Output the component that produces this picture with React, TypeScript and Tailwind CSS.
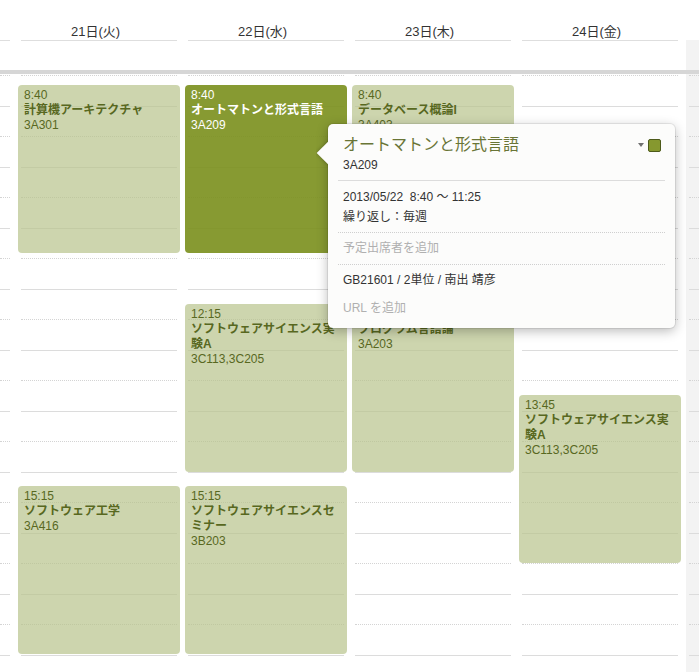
import React from "react";

type Ev = { top: number; time: string; title: string; room: string; selected?: boolean };

const days = ["21日(火)", "22日(水)", "23日(木)", "24日(金)"];

const events: Ev[][] = [
  [
    { top: 11, time: "8:40", title: "計算機アーキテクチャ", room: "3A301" },
    { top: 412, time: "15:15", title: "ソフトウェア工学", room: "3A416" },
  ],
  [
    { top: 11, time: "8:40", title: "オートマトンと形式言語", room: "3A209", selected: true },
    { top: 230, time: "12:15", title: "ソフトウェアサイエンス実験A", room: "3C113,3C205" },
    { top: 412, time: "15:15", title: "ソフトウェアサイエンスセミナー", room: "3B203" },
  ],
  [
    { top: 11, time: "8:40", title: "データベース概論I", room: "3A403" },
    { top: 230, time: "12:15", title: "プログラム言語論", room: "3A203" },
  ],
  [{ top: 321, time: "13:45", title: "ソフトウェアサイエンス実験A", room: "3C113,3C205" }],
];

function Lines() {
  return (
    <>
      <div className="h-[2px] border-b border-dotted border-[#d4d4d4]" />
      <div className="h-[31px] border-b border-[#dcdcdc]" />
      {Array.from({ length: 10 }).map((_, i) => (
        <React.Fragment key={i}>
          <div className="h-[30px] border-b border-dotted border-[#d4d4d4]" />
          <div className="h-[31px] border-b border-[#dcdcdc]" />
        </React.Fragment>
      ))}
    </>
  );
}

function EventCard({ ev }: { ev: Ev }) {
  return (
    <div
      className={
        ev.selected
          ? "absolute left-0 right-0 h-[168px] rounded-[4px] pl-[6px] pr-[4px] pt-[3px] text-[12px] leading-[15px] bg-[#7a8f1c]/90 text-white"
          : "absolute left-0 right-0 h-[168px] rounded-[4px] pl-[6px] pr-[4px] pt-[3px] text-[12px] leading-[15px] bg-[#b8c38b]/70 text-[#58681f]"
      }
      style={{ top: ev.top }}
    >
      <div>{ev.time}</div>
      <div className="font-bold">{ev.title}</div>
      <div>{ev.room}</div>
    </div>
  );
}

export default function App() {
  return (
    <div className="relative w-[699px] h-[672px] overflow-hidden bg-white font-['Liberation_Sans','Noto_Sans_CJK_JP',sans-serif]">
      {/* header */}
      <div className="flex gap-[5px] h-[70px]">
        <div className="w-[13px] shrink-0">
          <div className="h-[41px] border-b border-[#dedede] mr-[3px]" />
        </div>
        {days.map((d) => (
          <div key={d} className="w-[162px] shrink-0 px-[3px]">
            <div className="h-[41px] border-b border-[#dedede] pt-[24px] pr-[7px] text-center text-[13px] leading-[16px] text-[#333]">
              {d}
            </div>
          </div>
        ))}
        <div className="w-[162px] shrink-0 flex flex-col">
          <div className="h-[40px]" />
          <div className="flex-1 bg-[#f3f3f3]" />
        </div>
      </div>
      <div className="h-[4px] bg-[#d6d6d6]" />

      {/* body */}
      <div className="flex gap-[5px] h-[598px] overflow-hidden">
        <div className="w-[13px] shrink-0 pr-[3px]">
          <Lines />
        </div>
        {events.map((col, i) => (
          <div key={i} className="relative w-[162px] shrink-0">
            <div className="px-[3px]">
              <Lines />
            </div>
            {col.map((ev) => (
              <EventCard key={ev.time + ev.title} ev={ev} />
            ))}
          </div>
        ))}
        <div className="w-[162px] shrink-0 bg-[#f3f3f3] px-[3px]">
          <Lines />
        </div>
      </div>

      {/* popover */}
      <div className="absolute left-[328px] top-[124px] w-[347px] h-[204px] rounded-[5px] bg-[#fcfcfb] shadow-[0_0_0_1px_rgba(0,0,0,0.07),0_3px_12px_rgba(0,0,0,0.28)]">
        <div className="absolute left-[-12px] top-[13px] w-[12px] h-[32px] overflow-hidden">
          <div className="absolute left-[4px] top-[8px] w-[16px] h-[16px] rotate-45 bg-[#fcfcfb] shadow-[0_0_4px_rgba(0,0,0,0.3)]" />
        </div>
        <div className="flex items-start pl-[15px] pr-[14px] pt-[11px]">
          <div className="flex-1 text-[16px] leading-[20px] text-[#697536]">オートマトンと形式言語</div>
          <div className="mt-[8px] mr-[4px] w-0 h-0 border-l-[3px] border-r-[3px] border-t-[4px] border-l-transparent border-r-transparent border-t-[#707070]" />
          <div className="mt-[4px] w-[13px] h-[13px] rounded-[2px] bg-[#86982f] border border-[#4d5a1a]" />
        </div>
        <div className="pl-[15px] text-[12px] leading-[20px] text-[#333]">3A209</div>
        <div className="mx-[10px] mt-[5px] border-t border-[#dcdcdc]" />
        <div className="mt-[6px] pl-[15px] text-[12px] leading-[20px] text-[#333] whitespace-pre">2013/05/22  8:40 〜 11:25</div>
        <div className="pl-[15px] text-[12px] leading-[20px] text-[#333]">繰り返し：毎週</div>
        <div className="mx-[10px] mt-[5px] border-t border-dotted border-[#cfcfcf]" />
        <div className="mt-[5px] pl-[15px] text-[12px] leading-[20px] text-[#b0b0b0]">予定出席者を追加</div>
        <div className="mx-[10px] mt-[6px] border-t border-dotted border-[#cfcfcf]" />
        <div className="mt-[5px] pl-[15px] text-[12px] leading-[20px] text-[#333]">GB21601 / 2単位 / 南出 靖彦</div>
        <div className="mt-[8px] pl-[15px] text-[12px] leading-[20px] text-[#b0b0b0]">URL を追加</div>
      </div>
    </div>
  );
}
